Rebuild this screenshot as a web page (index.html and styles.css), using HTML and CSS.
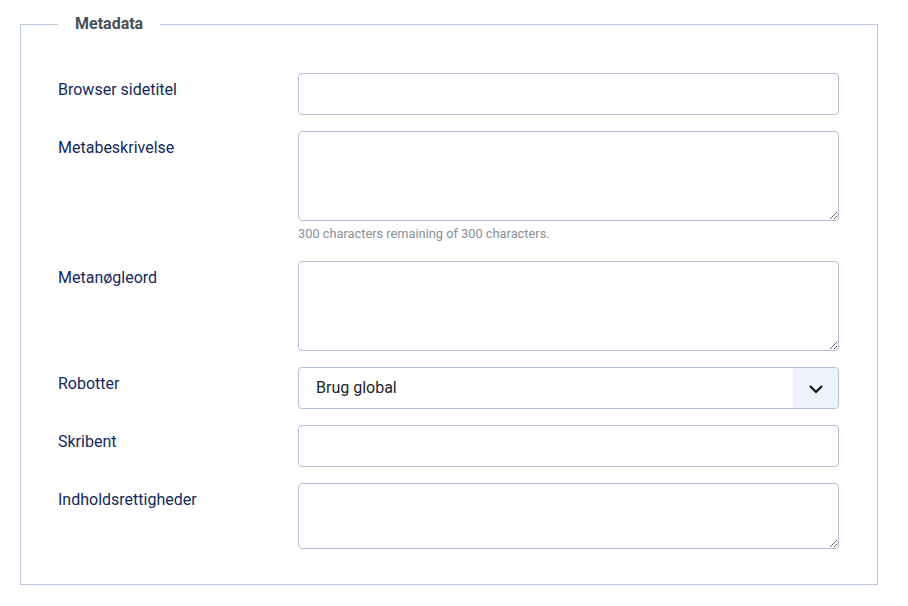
FILE: index.html
```html
<!DOCTYPE html>
<html lang="da">
<head>
<meta charset="utf-8">
<title>Metadata</title>
<link rel="stylesheet" href="styles.css">
</head>
<body>
<fieldset class="options">
  <legend class="legend">Metadata</legend>
  <div class="row">
    <label class="label" for="f1">Browser sidetitel</label>
    <div class="controls"><input id="f1" class="input" type="text"></div>
  </div>
  <div class="row">
    <label class="label" for="f2">Metabeskrivelse</label>
    <div class="controls">
      <textarea id="f2" class="input area"></textarea>
      <div class="help">300 characters remaining of 300 characters.</div>
    </div>
  </div>
  <div class="row">
    <label class="label" for="f3">Metanøgleord</label>
    <div class="controls"><textarea id="f3" class="input area"></textarea></div>
  </div>
  <div class="row">
    <label class="label">Robotter</label>
    <div class="controls">
      <div class="select">
        <span class="select-value">Brug global</span>
        <span class="select-btn">
          <svg width="16" height="10" viewBox="0 0 16 10"><path d="M2 2 L8 8 L14 2" fill="none" stroke="#111" stroke-width="2.2"/></svg>
        </span>
      </div>
    </div>
  </div>
  <div class="row">
    <label class="label" for="f5">Skribent</label>
    <div class="controls"><input id="f5" class="input" type="text"></div>
  </div>
  <div class="row last">
    <label class="label" for="f6">Indholdsrettigheder</label>
    <div class="controls"><textarea id="f6" class="input area small"></textarea></div>
  </div>
</fieldset>
</body>
</html>
```

FILE: styles.css
```css
html, body {
  margin: 0;
  padding: 0;
  background: #fff;
}
body {
  padding: 11px 30px 0 20px;
  font-family: Roboto, "Noto Sans", sans-serif;
  font-size: 16px;
  color: #212529;
}
.options {
  margin: 0;
  width: 858px;
  box-sizing: border-box;
  border: 1px solid #bccadf;
  padding: 36px 38px 35px 37px;
}
.legend {
  padding: 0 17px;
  margin-left: 0;
  font-size: 16px;
  font-weight: 700;
  line-height: 26px;
  color: #495057;
}
.row {
  display: flex;
  margin-bottom: 16px;
}
.row.last {
  margin-bottom: 0;
}
.label {
  width: 240px;
  flex: none;
  padding-top: 5px;
  line-height: 24px;
  color: #13295c;
}
.controls {
  flex: 1;
}
.input {
  display: block;
  box-sizing: border-box;
  width: 100%;
  height: 42px;
  margin: 0;
  border: 1px solid #b2c0d9;
  border-radius: 4px;
  font: inherit;
  background: #fff;
}
.area {
  height: 90px;
  resize: vertical;
}
.area.small {
  height: 66px;
}
.help {
  margin-top: 4px;
  font-size: 12.8px;
  line-height: 18px;
  color: #8a8f95;
  height: 20px;
}
.select {
  display: flex;
  height: 42px;
  box-sizing: border-box;
  border: 1px solid #b2c0d9;
  border-radius: 4px;
  overflow: hidden;
}
.select-value {
  flex: 1;
  padding-left: 17px;
  line-height: 40px;
  color: #212529;
}
.select-btn {
  width: 45px;
  background: #eef2fa;
  display: flex;
  align-items: center;
  justify-content: center;
  padding-top: 1px;
}
```
